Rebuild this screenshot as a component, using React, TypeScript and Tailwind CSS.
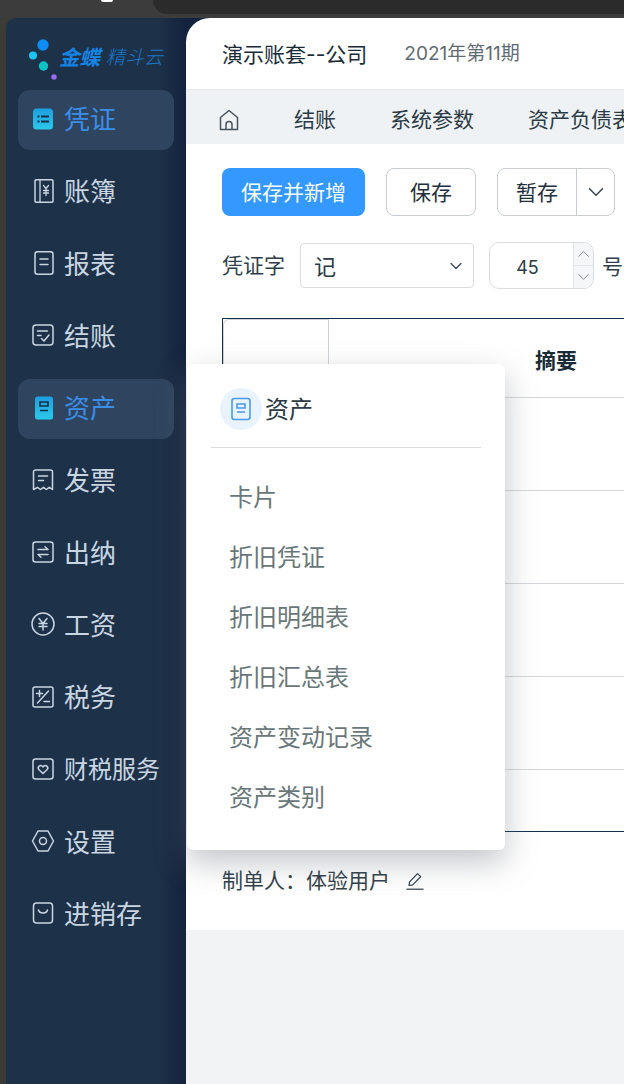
import React from "react";
import { ChevronDown, ChevronUp } from "lucide-react";

const Ic = ({ children }: { children: React.ReactNode }) => (
  <svg width="24" height="24" viewBox="0 0 24 24" fill="none" stroke="#c9d6e2" strokeWidth="1.5" strokeLinecap="round" strokeLinejoin="round" className="mb-[3px] shrink-0">
    {children}
  </svg>
);

const GradDefs = () => (
  <svg width="0" height="0" className="absolute">
    <defs>
      <linearGradient id="cy" x1="0" y1="0" x2="0" y2="1">
        <stop offset="0" stopColor="#1e9fe0" />
        <stop offset="1" stopColor="#2bc8ea" />
      </linearGradient>
    </defs>
  </svg>
);

const items: { label: string; active?: boolean; icon: React.ReactNode }[] = [
  {
    label: "凭证",
    active: true,
    icon: (
      <svg width="24" height="24" viewBox="0 0 24 24" className="mb-[3px] shrink-0">
        <rect x="2" y="1.5" width="20" height="21" rx="3.5" fill="url(#cy)" />
        <path d="M6.5 9.5h2M6.5 14.5h2M10 9.5h8M10 14.5h8" stroke="#173049" strokeWidth="1.8" />
      </svg>
    ),
  },
  {
    label: "账簿",
    icon: (
      <Ic>
        <rect x="4" y="0.8" width="18" height="22.4" rx="1.2" />
        <path d="M9 0.8v22.4M12.5 6.5l2.5 3 2.5-3M15 9.5v7M12.5 11.5h5M12.5 14h5" strokeWidth="1.3" />
      </Ic>
    ),
  },
  {
    label: "报表",
    icon: (
      <Ic>
        <rect x="4" y="0.8" width="18" height="22.4" rx="2.5" />
        <path d="M9 8h8M9 13.5h8" />
      </Ic>
    ),
  },
  {
    label: "结账",
    icon: (
      <Ic>
        <rect x="2" y="2" width="20" height="20" rx="3" />
        <path d="M6.5 8h10M6.5 12.5h3.5M10.5 15.5l2.5 2.5 5-6" />
      </Ic>
    ),
  },
  {
    label: "资产",
    active: true,
    icon: (
      <svg width="24" height="24" viewBox="0 0 24 24" className="mb-[3px] shrink-0">
        <rect x="4" y="0.5" width="18" height="23" rx="2.5" fill="url(#cy)" />
        <path d="M9 6h8v4H9zM9 14.5h8" fill="none" stroke="#173049" strokeWidth="1.7" />
      </svg>
    ),
  },
  {
    label: "发票",
    icon: (
      <Ic>
        <path d="M2.5 21.5V4a2 2 0 0 1 2-2h15a2 2 0 0 1 2 2v17.5l-3.2-2.2-3 2.2-2.8-2.2-3 2.2-3-2.2z" />
        <path d="M7.5 8h9M7.5 12.5h5" />
      </Ic>
    ),
  },
  {
    label: "出纳",
    icon: (
      <Ic>
        <rect x="2" y="2" width="20" height="20" rx="2.5" />
        <path d="M7 9.5h10l-3-2.7M17 14.5H7l3 2.7" />
      </Ic>
    ),
  },
  {
    label: "工资",
    icon: (
      <Ic>
        <circle cx="12" cy="12" r="11" />
        <path d="M8 6.5l4 5 4-5M12 11.5V18M8 11.5h8M8 14.5h8" />
      </Ic>
    ),
  },
  {
    label: "税务",
    icon: (
      <Ic>
        <rect x="2" y="2" width="20" height="20" rx="2" />
        <path d="M5.5 8.5h6M8.5 5.5v6M17.5 6L6.5 18M13 16.5h5.5" />
      </Ic>
    ),
  },
  {
    label: "财税服务",
    icon: (
      <Ic>
        <rect x="2" y="2" width="20" height="20" rx="2.5" />
        <path d="M12 16.5l-4-3.8a2.4 2.4 0 0 1 3.4-3.4l.6.6.6-.6a2.4 2.4 0 0 1 3.4 3.4z" />
      </Ic>
    ),
  },
  {
    label: "设置",
    icon: (
      <Ic>
        <path d="M7 2h10l5.5 10L17 22H7L1.5 12z" />
        <circle cx="12" cy="12" r="3.5" />
      </Ic>
    ),
  },
  {
    label: "进销存",
    icon: (
      <Ic>
        <rect x="2.5" y="2" width="19" height="20" rx="3" />
        <path d="M7.5 9c1 4 8 4 9 0" />
      </Ic>
    ),
  },
];

const subItems = ["卡片", "折旧凭证", "折旧明细表", "折旧汇总表", "资产变动记录", "资产类别"];

export default function App() {
  return (
    <div
      className="relative flex h-[1084px] w-[624px] flex-col overflow-hidden bg-[#3a3a36] text-[#1f2f3d]"
      style={{ fontFamily: 'Inter, "Noto Sans CJK SC", "Noto Sans", sans-serif' }}
    >
      <GradDefs />
      <div className="flex h-[18px] shrink-0 bg-[#3c3c3c]">
        <div className="ml-[101px] h-[2px] w-[12px] shrink-0 rounded-b-full bg-white" />
        <div className="ml-[40px] h-[14px] flex-1 rounded-bl-[14px] bg-[#2b2b2b]" />
      </div>
      <div className="flex min-h-0 flex-1 pl-[6px]">
        <aside className="flex w-[180px] shrink-0 flex-col rounded-tl-[10px] bg-gradient-to-r from-[#1d3148] from-[85%] to-[#13233d]">
          <div className="flex h-[72px] items-start pl-[22px] pt-[20px]">
            <svg width="36" height="44" viewBox="0 0 36 44" className="shrink-0">
              <circle cx="15" cy="7" r="5.7" fill="#0f8cf5" />
              <circle cx="5" cy="17.5" r="4" fill="#1dc4ef" />
              <circle cx="15.5" cy="28" r="4.7" fill="#0bc2c5" />
              <circle cx="26" cy="39" r="2.7" fill="#9f6bef" />
            </svg>
            <span className="mt-[9px] -ml-[5px] text-[20.5px] leading-[22px] font-bold whitespace-nowrap text-[#1683e2] italic">金蝶</span>
            <span className="mt-[9px] ml-[6px] text-[19px] leading-[22px] font-light whitespace-nowrap text-[#1a78cc] italic">精斗云</span>
          </div>
          <nav className="flex flex-col gap-[12.25px] pl-[12px]">
            {items.map((it) => (
              <div
                key={it.label}
                className={`flex h-[60px] w-[156px] items-center gap-[9px] rounded-[12px] pl-[13px] whitespace-nowrap ${
                  it.label.length > 3 ? "text-[24px]" : "text-[26px]"
                } ${it.active ? "bg-[#2f445e] text-[#3a8ee8]" : "text-[#c9d6e2]"}`}
              >
                {it.icon}
                <span className="leading-none">{it.label}</span>
              </div>
            ))}
          </nav>
        </aside>

        <main className="flex min-w-0 flex-1 flex-col bg-[#13233d]">
          <div className="flex h-[912px] shrink-0 flex-col overflow-hidden rounded-tl-[24px] bg-white">
            <header className="flex h-[72px] shrink-0 items-center border-b border-[#e6e9ee] pt-[2px] pl-[36px]">
              <span className="text-[21px] whitespace-nowrap text-[#1a2b38]">演示账套--公司</span>
              <span className="ml-[37px] text-[19px] whitespace-nowrap text-[#5f6b73]">2021年第11期</span>
            </header>
            <div className="flex h-[54px] shrink-0 items-center overflow-hidden bg-[#eff2f5] pt-[6px] pl-[33px] text-[21px] whitespace-nowrap text-[#2b3a45]">
              <svg width="20" height="22" viewBox="0 0 20 22" fill="none" stroke="#46525c" strokeWidth="1.5" className="shrink-0">
                <path d="M1.5 20.5V8.5L10 1.5l8.5 7v12z" strokeLinejoin="round" />
                <path d="M7 20.5v-5a3 3 0 0 1 6 0v5" />
              </svg>
              <span className="ml-[55px]">结账</span>
              <span className="ml-[54px]">系统参数</span>
              <span className="ml-[54px]">资产负债表</span>
            </div>
            <div className="flex-1 pl-[36px]">
              <div className="mt-[24px] flex h-[48px] items-center whitespace-nowrap">
                <button className="h-[48px] w-[143px] rounded-[8px] bg-[#3499ff] pt-[2px] text-[21px] text-white">保存并新增</button>
                <button className="ml-[21px] h-[48px] w-[90px] rounded-[8px] border border-[#c9cdd2] bg-white pt-[2px] text-[21px] text-[#1f2f3d]">保存</button>
                <div className="ml-[21px] flex h-[48px] w-[118px] shrink-0 rounded-[8px] border border-[#c9cdd2] bg-white">
                  <span className="flex w-[79px] items-center justify-center border-r border-[#c9cdd2] pt-[2px] text-[21px] text-[#1f2f3d]">暂存</span>
                  <span className="flex flex-1 items-center justify-center">
                    <ChevronDown size={26} strokeWidth={1.4} color="#3b4a55" />
                  </span>
                </div>
              </div>
              <div className="mt-[26px] flex h-[47px] items-center whitespace-nowrap">
                <span className="w-[78px] text-[21px] text-[#303f4a]">凭证字</span>
                <div className="flex h-[45px] w-[174px] shrink-0 items-center justify-between rounded-[4px] border border-[#d9dcdf] pr-[7px] pl-[13px] text-[22px] text-[#2b3a45]">
                  <span className="pt-[3px]">记</span>
                  <ChevronDown size={20} strokeWidth={1.6} color="#3b4a55" />
                </div>
                <div className="ml-[15px] flex h-[47px] w-[105px] shrink-0 overflow-hidden rounded-[10px] border border-[#d9dcdf] text-[#2b3a45]">
                  <span className="flex flex-1 items-center justify-center pt-[3px] pr-[8px] text-[18px]">45</span>
                  <div className="flex w-[20px] flex-col border-l border-[#e3e5e8] bg-[#f5f6f7]">
                    <span className="flex flex-1 items-center justify-center border-b border-[#e3e5e8]">
                      <ChevronUp size={20} strokeWidth={1.1} color="#6f7a82" />
                    </span>
                    <span className="flex flex-1 items-center justify-center">
                      <ChevronDown size={20} strokeWidth={1.1} color="#6f7a82" />
                    </span>
                  </div>
                </div>
                <span className="ml-[8px] pt-[2px] text-[21px] text-[#303f4a]">号</span>
              </div>
              <div className="mt-[29px] h-[514px] border-y border-l border-[#12304a]">
                <div className="flex h-[79px] border-b border-[#d5d8db]">
                  <div className="w-[106px] shrink-0 rounded-tl-[6px] border-t border-r border-l border-[#cfd3d7]" />
                  <div className="flex flex-1 items-center pt-[5px] pl-[206px] text-[21px] font-bold whitespace-nowrap text-[#1a2b38]">摘要</div>
                </div>
                {[0, 1, 2, 3].map((r) => (
                  <div key={r} className="h-[93px] border-b border-[#d5d8db]" />
                ))}
              </div>
              <div className="mt-[33px] flex items-center text-[21px] whitespace-nowrap text-[#303f4a]">
                <span>制单人：体验用户</span>
                <svg width="18" height="18" viewBox="0 0 18 18" fill="none" stroke="#2b3a45" strokeWidth="1.2" strokeLinejoin="round" className="ml-[16px] shrink-0">
                  <path d="M0.5 17.2h17" />
                  <path d="M3 13.5l0.6-3.6L11.5 1.6l3.2 3-8 8.2z" />
                </svg>
              </div>
            </div>
          </div>
          <div className="flex-1 bg-[#f2f3f5]" />
        </main>
      </div>

      <div className="absolute top-[364px] left-[187px] h-[486px] w-[318px] rounded-[6px] bg-white shadow-[0_12px_32px_rgba(110,115,125,0.42)]">
        <div className="mx-[24px] flex h-[84px] items-center border-b border-[#d9dcdf] pt-[6px] pl-[9px]">
          <span className="flex h-[42px] w-[42px] shrink-0 items-center justify-center rounded-full bg-[#e8f3fd]">
            <svg width="20" height="24" viewBox="0 0 20 24" fill="none" stroke="#4a9be8" strokeWidth="1.6">
              <rect x="1" y="1.5" width="18" height="21" rx="2.5" />
              <path d="M6 7h8v4H6zM6 15h8" />
            </svg>
          </span>
          <span className="mt-[2px] ml-[3px] text-[24px] leading-none text-[#2b3a45]">资产</span>
        </div>
        <div className="flex flex-col pt-[20px] pl-[42px]">
          {subItems.map((s) => (
            <div key={s} className="flex h-[60px] items-center text-[24px] whitespace-nowrap text-[#6a7779]">
              {s}
            </div>
          ))}
        </div>
      </div>
    </div>
  );
}
